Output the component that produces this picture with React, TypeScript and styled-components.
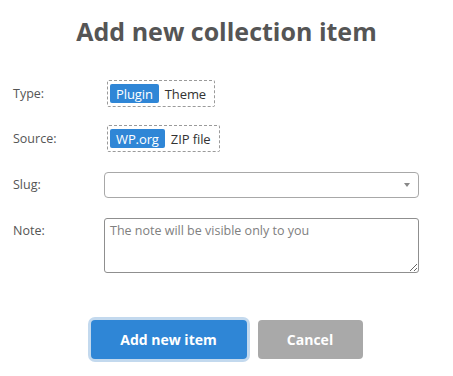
import React from "react";
import styled, { createGlobalStyle } from "styled-components";

const GlobalStyle = createGlobalStyle`
  html, body {
    margin: 0;
    padding: 0;
    background: #ffffff;
  }
  body {
    font-family: "Open Sans", "Noto Sans", sans-serif;
    color: #444;
  }
`;

const Dialog = styled.div`
  width: 453px;
  height: 376px;
  box-sizing: border-box;
  padding: 14px 13px 0 13px;
  display: flex;
  flex-direction: column;
`;

const Title = styled.h2`
  margin: 0;
  text-align: center;
  font-size: 25px;
  font-weight: 700;
  color: #555555;
  line-height: 34px;
`;

const Form = styled.div`
  margin-top: 32px;
  display: grid;
  grid-template-columns: 91px 1fr;
  row-gap: 18px;
  padding-right: 21px;
`;

const Label = styled.div<{ top?: boolean }>`
  font-size: 12.5px;
  color: #555;
  display: flex;
  align-items: ${({ top }) => (top ? "flex-start" : "center")};
  padding-top: ${({ top }) => (top ? "6px" : "0")};
`;

const Toggle = styled.div`
  justify-self: start;
  display: flex;
  align-items: center;
  padding: 3px 2px;
  border: 1px dashed #9a9a9a;
  border-radius: 2px;
  height: 19px;
  margin-left: 3px;
`;

const ToggleOption = styled.div<{ active?: boolean }>`
  height: 19px;
  padding: 0 6px;
  display: flex;
  align-items: center;
  border-radius: 2px;
  font-size: 13px;
  letter-spacing: -0.1px;
  background: ${({ active }) => (active ? "#2f86d6" : "transparent")};
  color: ${({ active }) => (active ? "#ffffff" : "#333")};
`;

const Select = styled.div`
  height: 24px;
  margin-top: 2px;
  border: 1px solid #a8a8a8;
  border-radius: 4px;
  display: flex;
  align-items: center;
  justify-content: flex-end;
  padding-right: 8px;
`;

const Caret = styled.div`
  width: 0;
  height: 0;
  border-left: 3.5px solid transparent;
  border-right: 3.5px solid transparent;
  border-top: 4px solid #888;
`;

const NoteArea = styled.textarea`
  height: 55px;
  margin-top: 2px;
  box-sizing: border-box;
  border: 1px solid #8f8f8f;
  border-radius: 3px;
  padding: 3px 5px;
  font-family: "Open Sans", "Noto Sans", sans-serif;
  font-size: 12.5px;
  color: #333;
  resize: vertical;
  &::placeholder {
    color: #808080;
  }
`;

const Actions = styled.div`
  margin-top: 47px;
  display: flex;
  justify-content: center;
  gap: 11px;
`;

const Button = styled.button<{ primary?: boolean }>`
  height: 39px;
  border: none;
  border-radius: 4px;
  font-family: "Open Sans", "Noto Sans", sans-serif;
  font-size: 14px;
  font-weight: 700;
  color: #ffffff;
  background: ${({ primary }) => (primary ? "#2f86d6" : "#a9a9a9")};
  width: ${({ primary }) => (primary ? "156px" : "105px")};
  box-shadow: ${({ primary }) => (primary ? "0 0 0 3px #c3d9ee" : "none")};
`;

export default function App() {
  return (
    <>
      <GlobalStyle />
      <Dialog>
        <Title>Add new collection item</Title>
        <Form>
          <Label>Type:</Label>
          <Toggle>
            <ToggleOption active>Plugin</ToggleOption>
            <ToggleOption>Theme</ToggleOption>
          </Toggle>
          <Label>Source:</Label>
          <Toggle>
            <ToggleOption active>WP.org</ToggleOption>
            <ToggleOption>ZIP file</ToggleOption>
          </Toggle>
          <Label>Slug:</Label>
          <Select>
            <Caret />
          </Select>
          <Label top>Note:</Label>
          <NoteArea placeholder="The note will be visible only to you" />
        </Form>
        <Actions>
          <Button primary>Add new item</Button>
          <Button>Cancel</Button>
        </Actions>
      </Dialog>
    </>
  );
}
